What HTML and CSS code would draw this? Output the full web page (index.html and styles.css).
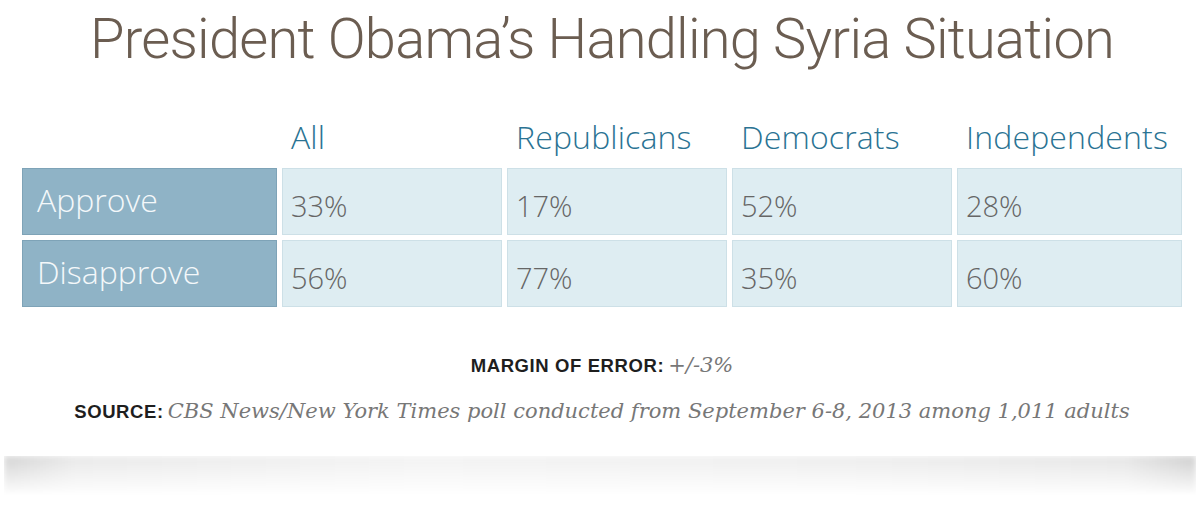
FILE: index.html
```html
<!DOCTYPE html>
<html lang="en">
<head>
<meta charset="utf-8">
<title>President Obama's Handling Syria Situation</title>
<link rel="stylesheet" href="styles.css">
</head>
<body>
<div class="card">
  <h1 class="title">President Obama’s Handling Syria Situation</h1>
  <div class="poll">
    <div class="head-row">
      <div class="corner"></div>
      <div class="col-head">All</div>
      <div class="col-head">Republicans</div>
      <div class="col-head">Democrats</div>
      <div class="col-head">Independents</div>
    </div>
    <div class="data-row">
      <div class="row-label">Approve</div>
      <div class="cell">33%</div>
      <div class="cell">17%</div>
      <div class="cell">52%</div>
      <div class="cell">28%</div>
    </div>
    <div class="data-row">
      <div class="row-label">Disapprove</div>
      <div class="cell">56%</div>
      <div class="cell">77%</div>
      <div class="cell">35%</div>
      <div class="cell">60%</div>
    </div>
  </div>
  <div class="notes">
    <p class="note"><b class="note-key">MARGIN OF ERROR:</b> <i class="note-val">+/-3%</i></p>
    <p class="note"><b class="note-key">SOURCE:</b> <i class="note-val">CBS News/New York Times poll conducted from September 6-8, 2013 among 1,011 adults</i></p>
  </div>
</div>
<div class="shadow"></div>
</body>
</html>
```

FILE: styles.css
```css
html, body {
  margin: 0;
  padding: 0;
  background: #ffffff;
}

.card {
  height: 456px;
  background: #ffffff;
  box-sizing: border-box;
  padding: 0 18px 0 22px;
}

.title {
  margin: 0;
  height: 86px;
  font-family: Roboto, "Liberation Sans", sans-serif;
  font-weight: 300;
  font-size: 56px;
  line-height: 78px;
  color: #6b5d51;
  text-align: center;
  letter-spacing: -0.75px;
}

.poll {
  display: flex;
  flex-direction: column;
  gap: 5px;
}

.head-row,
.data-row {
  display: grid;
  grid-template-columns: 255px 220px 220px 220px 1fr;
  column-gap: 5px;
}

.head-row {
  height: 77px;
  align-items: end;
}

.col-head {
  padding: 0 0 8px 9px;
  font-family: "Open Sans", Roboto, sans-serif;
  font-weight: 300;
  font-size: 32px;
  line-height: 36px;
  letter-spacing: 0.15px;
  color: #2a7393;
}

.data-row {
  height: 67px;
}

.row-label,
.cell {
  box-sizing: border-box;
  font-family: "Open Sans", Roboto, sans-serif;
  font-weight: 300;
}

.row-label {
  background: #8fb3c6;
  border: 1px solid #7ea3b7;
  color: #f4f8fa;
  padding: 13px 0 0 14px;
  line-height: 36px;
  font-size: 32px;
}

.cell {
  background: #deedf2;
  border: 1px solid #cde0e7;
  color: #666666;
  padding: 19px 0 0 8px;
  line-height: 36px;
  font-size: 29px;
}

.notes {
  margin-top: 46px;
  text-align: center;
}

.note {
  margin: 0 0 20px;
  line-height: 24px;
  color: #777777;
}

.note-key {
  font-family: "Liberation Sans", Arial, sans-serif;
  font-weight: 700;
  font-size: 18.5px;
  letter-spacing: 0.6px;
  color: #1e1e1e;
}

.note-val {
  font-family: "DejaVu Serif", "Liberation Serif", serif;
  font-style: italic;
  font-size: 21px;
  color: #777777;
}

.shadow {
  height: 40px;
  margin: 0 4px 0 4px;
  background:
    linear-gradient(to right, rgba(0,0,0,0.18) 0%, rgba(0,0,0,0.09) 6%, rgba(0,0,0,0.05) 35%, rgba(0,0,0,0.07) 70%, rgba(0,0,0,0.1) 94%, rgba(0,0,0,0.2) 100%);
  -webkit-mask-image: linear-gradient(to bottom, #000 0%, rgba(0,0,0,0.6) 40%, transparent 100%);
  mask-image: linear-gradient(to bottom, #000 0%, rgba(0,0,0,0.6) 40%, transparent 100%);
  filter: blur(3px);
}
```
